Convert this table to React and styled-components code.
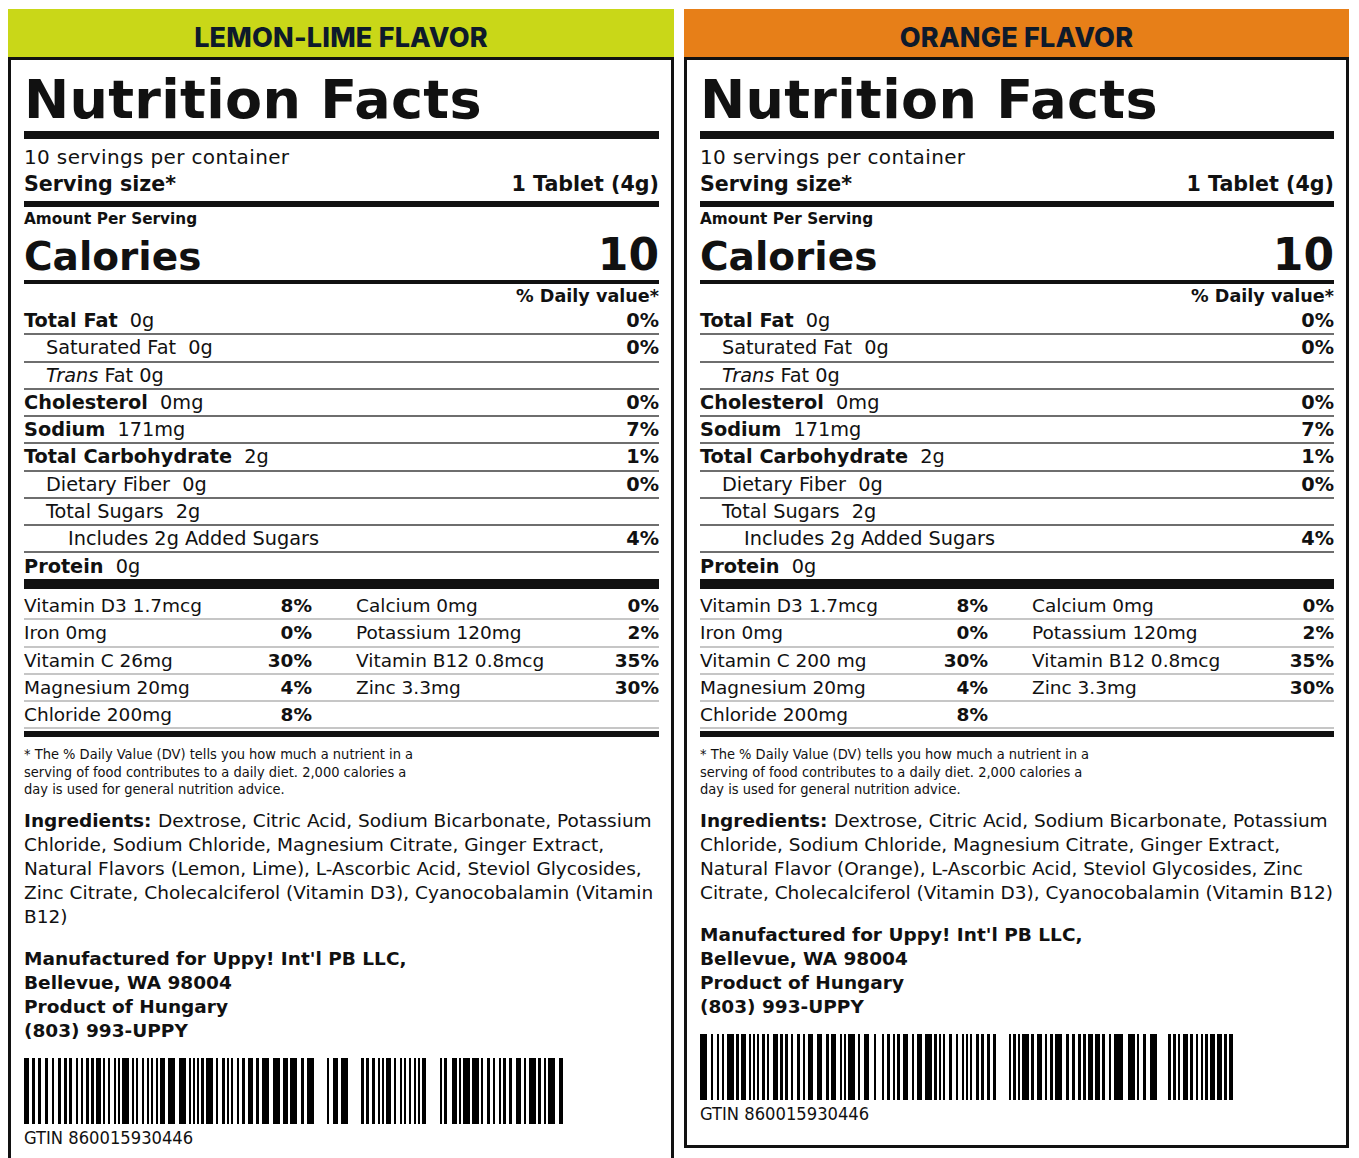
import React from "react";
import styled, { createGlobalStyle } from "styled-components";

const GlobalStyle = createGlobalStyle`
  html, body { margin: 0; padding: 0; background: #ffffff; }
  body { font-family: "DejaVu Sans", sans-serif; color: #111; }
`;

const Page = styled.div`
  display: grid;
  grid-template-columns: 666px 665px;
  column-gap: 10px;
  align-items: start;
  padding: 9px 10px 0 8px;
`;

const Label = styled.section`
  display: flex;
  flex-direction: column;
`;

const FlavorBar = styled.div`
  height: 48px;
  box-sizing: border-box;
  padding-top: 8px;
  background: ${(p) => p.$bg};
  display: flex;
  align-items: center;
  justify-content: center;
  font-family: "Inter", "Open Sans", sans-serif;
  font-weight: 800;
  font-size: 27px;
  letter-spacing: 0.2px;
  color: #0e1a2b;
`;

const Panel = styled.div`
  border: 3px solid #111;
  padding: 0 12px 21px 13px;
  font-family: "DejaVu Sans", "Liberation Sans", sans-serif;
  color: #111;
  background: #fff;
`;

const Title = styled.h1`
  margin: 0;
  padding-top: 8px;
  font-size: 54px;
  line-height: 63px;
  font-weight: 700;
  letter-spacing: 0.3px;
  border-bottom: 8px solid #111;
  white-space: nowrap;
`;

const ServingBlock = styled.div`
  padding: 5px 0 3px;
  border-bottom: 6px solid #111;
`;

const Line = styled.div`
  display: flex;
  justify-content: space-between;
  align-items: baseline;
  font-size: ${(p) => (p.$bold ? 20.6 : 20)}px;
  line-height: 27px;
  font-weight: ${(p) => (p.$bold ? 700 : 400)};
  letter-spacing: ${(p) => (p.$bold ? "0" : "0.35px")};
`;

const AmountLabel = styled.div`
  padding-top: 1px;
  font-size: 15.3px;
  line-height: 22px;
  font-weight: 700;
`;

const CaloriesRow = styled.div`
  display: flex;
  justify-content: space-between;
  align-items: baseline;
  height: 50px;
  line-height: 50px;
  font-weight: 700;
  border-bottom: 4px solid #111;
`;

const CalLabel = styled.span`
  font-size: 39px;
`;

const CalValue = styled.span`
  font-size: 44px;
`;

const DVHeader = styled.div`
  text-align: right;
  font-size: 17.6px;
  line-height: 24px;
  font-weight: 700;
`;

const NutrientList = styled.div`
  border-bottom: 10px solid #111;
`;

const NutrientRow = styled.div`
  display: flex;
  justify-content: space-between;
  align-items: baseline;
  padding-left: ${(p) => p.$indent * 22}px;
  padding-top: 1px;
  font-size: 19.3px;
  line-height: 24.25px;
  border-bottom: 2px solid #6e6e6e;
  &:last-child {
    border-bottom: none;
    line-height: 25px;
  }
`;

const Name = styled.span`
  font-weight: ${(p) => (p.$bold ? 700 : 400)};
`;

const Amount = styled.span`
  padding-left: ${(p) => (p.$tight ? 0 : 6)}px;
`;

const Pct = styled.span`
  font-weight: 700;
`;

const VitaminSection = styled.div`
  padding: 4px 0 2px;
  border-bottom: 6px solid #111;
`;

const VitaminRow = styled.div`
  display: grid;
  grid-template-columns: 288px 1fr;
  column-gap: 44px;
  font-size: 18.5px;
  line-height: 25.2px;
  border-bottom: 2px solid #c6c6c6;
`;

const VitaminCell = styled.div`
  display: flex;
  justify-content: space-between;
  align-items: baseline;
`;

const Footnote = styled.p`
  margin: 9px 0 0;
  width: 400px;
  font-family: "DejaVu Sans Condensed", "DejaVu Sans", sans-serif;
  font-stretch: condensed;
  font-size: 14.5px;
  line-height: 17.5px;
`;

const Ingredients = styled.p`
  margin: 10px 0 0;
  font-size: 18.5px;
  line-height: 24px;
`;

const Strong = styled.b`
  font-weight: 700;
`;

const Maker = styled.p`
  margin: 18px 0 0;
  font-size: 18.5px;
  line-height: 24px;
  font-weight: 700;
`;

const BarcodeSvg = styled.svg`
  display: block;
  margin-top: 15px;
`;

const Gtin = styled.div`
  margin-top: 4px;
  font-family: "DejaVu Sans Condensed", "DejaVu Sans", sans-serif;
  font-stretch: condensed;
  font-size: 18.2px;
  line-height: 20px;
`;

function makeBars(seed, width, gaps) {
  let s = seed;
  const rnd = () => {
    s = (s * 1103515245 + 12345) % 2147483648;
    return s / 2147483648;
  };
  const barW = [2, 2, 3, 2, 5, 3, 7];
  const spaceW = [2, 3, 2, 4, 3];
  const bars = [];
  let x = 0;
  while (x < width) {
    const gap = gaps.find((g) => x >= g[0] && x < g[1]);
    if (gap) {
      if (gap[2]) bars.push([gap[0] + gap[2][0], gap[2][1]]);
      x = gap[1];
      continue;
    }
    const w = barW[Math.floor(rnd() * barW.length)];
    const bw = Math.min(w, width - x);
    bars.push([x, bw]);
    x += bw + spaceW[Math.floor(rnd() * spaceW.length)];
  }
  return bars;
}

function Barcode({ seed, width, gaps }) {
  const bars = makeBars(seed, width, gaps);
  return (
    <BarcodeSvg width={width} height={66} viewBox={`0 0 ${width} 66`}>
      {bars.map(([x, w], i) => (
        <rect key={i} x={x} y={0} width={w} height={66} fill="#000" />
      ))}
    </BarcodeSvg>
  );
}

const nutrients = [
  { name: "Total Fat", amount: "0g", pct: "0%", bold: true, indent: 0 },
  { name: "Saturated Fat", amount: "0g", pct: "0%", indent: 1 },
  { name: "Trans", amount: "Fat 0g", italic: true, indent: 1 },
  { name: "Cholesterol", amount: "0mg", pct: "0%", bold: true, indent: 0 },
  { name: "Sodium", amount: "171mg", pct: "7%", bold: true, indent: 0 },
  { name: "Total Carbohydrate", amount: "2g", pct: "1%", bold: true, indent: 0 },
  { name: "Dietary Fiber", amount: "0g", pct: "0%", indent: 1 },
  { name: "Total Sugars", amount: "2g", indent: 1 },
  { name: "Includes 2g Added Sugars", amount: "", pct: "4%", indent: 2 },
  { name: "Protein", amount: "0g", bold: true, indent: 0 },
];

const labels = [
  {
    flavor: "LEMON-LIME FLAVOR",
    color: "#c9d718",
    vitC: "Vitamin C 26mg",
    ingredients:
      "Dextrose, Citric Acid, Sodium Bicarbonate, Potassium Chloride, Sodium Chloride, Magnesium Citrate, Ginger Extract, Natural Flavors (Lemon, Lime), L-Ascorbic Acid, Steviol Glycosides, Zinc Citrate, Cholecalciferol (Vitamin D3), Cyanocobalamin (Vitamin B12)",
    seed: 11,
    barWidth: 539,
    gaps: [
      [286, 303, [2, 2]],
      [323, 337],
      [400, 416, [0, 2]],
      [421, 428],
    ],
  },
  {
    flavor: "ORANGE FLAVOR",
    color: "#e77f18",
    vitC: "Vitamin C 200 mg",
    ingredients:
      "Dextrose, Citric Acid, Sodium Bicarbonate, Potassium Chloride, Sodium Chloride, Magnesium Citrate, Ginger Extract, Natural Flavor (Orange), L-Ascorbic Acid, Steviol Glycosides, Zinc Citrate, Cholecalciferol (Vitamin D3), Cyanocobalamin (Vitamin B12)",
    seed: 29,
    barWidth: 533,
    gaps: [
      [171, 182, [3, 2]],
      [298, 309],
      [417, 428, [4, 2]],
      [457, 468],
    ],
  },
];

function NutritionLabel({ data }) {
  const vitamins = [
    [["Vitamin D3 1.7mcg", "8%"], ["Calcium 0mg", "0%"]],
    [["Iron 0mg", "0%"], ["Potassium 120mg", "2%"]],
    [[data.vitC, "30%"], ["Vitamin B12 0.8mcg", "35%"]],
    [["Magnesium 20mg", "4%"], ["Zinc 3.3mg", "30%"]],
    [["Chloride 200mg", "8%"], null],
  ];
  return (
    <Label>
      <FlavorBar $bg={data.color}>{data.flavor}</FlavorBar>
      <Panel>
        <Title>Nutrition Facts</Title>
        <ServingBlock>
          <Line>10 servings per container</Line>
          <Line $bold>
            <span>Serving size*</span>
            <span>1 Tablet (4g)</span>
          </Line>
        </ServingBlock>
        <AmountLabel>Amount Per Serving</AmountLabel>
        <CaloriesRow>
          <CalLabel>Calories</CalLabel>
          <CalValue>10</CalValue>
        </CaloriesRow>
        <DVHeader>% Daily value*</DVHeader>
        <NutrientList>
          {nutrients.map((n) => (
            <NutrientRow key={n.name} $indent={n.indent}>
              <span>
                {n.italic ? <i>{n.name}</i> : <Name $bold={n.bold}>{n.name}</Name>}
                {n.amount ? " " : ""}
                {n.amount && <Amount $tight={n.italic}>{n.amount}</Amount>}
              </span>
              {n.pct && <Pct>{n.pct}</Pct>}
            </NutrientRow>
          ))}
        </NutrientList>
        <VitaminSection>
          {vitamins.map((row, i) => (
            <VitaminRow key={i}>
              {row.map((cell, j) =>
                cell ? (
                  <VitaminCell key={j}>
                    <span>{cell[0]}</span>
                    <Pct>{cell[1]}</Pct>
                  </VitaminCell>
                ) : (
                  <VitaminCell key={j} />
                )
              )}
            </VitaminRow>
          ))}
        </VitaminSection>
        <Footnote>
          * The % Daily Value (DV) tells you how much a nutrient in a serving of food
          contributes to a daily diet. 2,000 calories a day is used for general nutrition
          advice.
        </Footnote>
        <Ingredients>
          <Strong>Ingredients: </Strong>
          {data.ingredients}
        </Ingredients>
        <Maker>
          Manufactured for Uppy! Int'l PB LLC,
          <br />
          Bellevue, WA 98004
          <br />
          Product of Hungary
          <br />
          (803) 993-UPPY
        </Maker>
        <Barcode seed={data.seed} width={data.barWidth} gaps={data.gaps} />
        <Gtin>GTIN 860015930446</Gtin>
      </Panel>
    </Label>
  );
}

export default function App() {
  return (
    <>
      <GlobalStyle />
      <Page>
        {labels.map((l) => (
          <NutritionLabel key={l.flavor} data={l} />
        ))}
      </Page>
    </>
  );
}
